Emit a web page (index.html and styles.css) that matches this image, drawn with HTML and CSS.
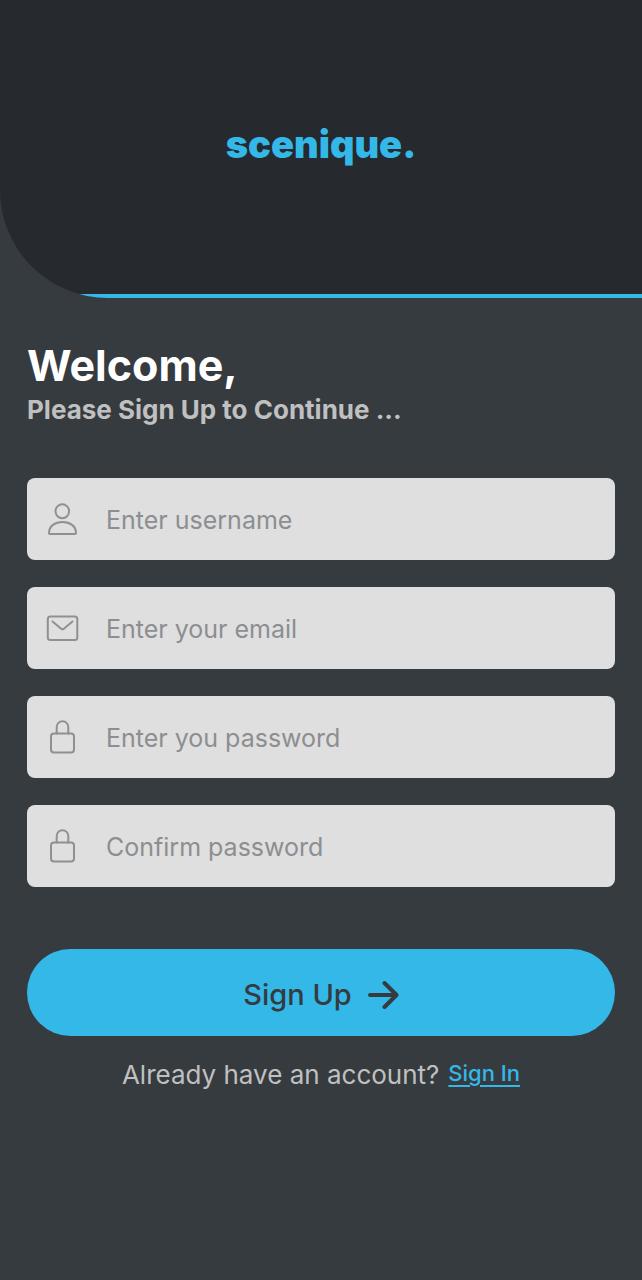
FILE: index.html
```html
<!DOCTYPE html>
<html lang="en">
<head>
<meta charset="utf-8">
<meta name="viewport" content="width=device-width, initial-scale=1">
<title>scenique. – Sign Up</title>
<link rel="stylesheet" href="styles.css">
</head>
<body>
<header class="hero"><span class="brand">scenique.</span></header>
<main class="content">
  <h1 class="title">Welcome,</h1>
  <p class="subtitle">Please Sign Up to Continue ...</p>
  <form class="form">
    <label class="field">
      <svg class="icon" viewBox="0 0 36 36" aria-hidden="true"><ellipse cx="18.300" cy="10.300" rx="6.800" ry="7"/><path d="M5 32C5 25 11 21 18.500 21S32 25 32 32q0 1-1 1H6q-1 0-1-1z"/></svg>
      <input class="input" type="text" placeholder="Enter username" aria-label="Username">
    </label>
    <label class="field">
      <svg class="icon" viewBox="0 0 36 36" aria-hidden="true"><rect x="3.800" y="6.500" width="29.500" height="23.500" rx="2.500"/><path d="M8.500 11.500l9 7.500q1 .7 2 0l9-7.500"/></svg>
      <input class="input" type="email" placeholder="Enter your email" aria-label="Email">
    </label>
    <label class="field">
      <svg class="icon" viewBox="0 0 36 36" aria-hidden="true"><rect x="7" y="14.500" width="23" height="19" rx="3"/><path d="M12.700 14.500V8a5.800 5.800 0 0 1 11.600 0v6.500"/></svg>
      <input class="input" type="password" placeholder="Enter you password" aria-label="Password">
    </label>
    <label class="field">
      <svg class="icon" viewBox="0 0 36 36" aria-hidden="true"><rect x="7" y="14.500" width="23" height="19" rx="3"/><path d="M12.700 14.500V8a5.800 5.800 0 0 1 11.600 0v6.500"/></svg>
      <input class="input" type="password" placeholder="Confirm password" aria-label="Confirm password">
    </label>
    <button class="submit" type="submit">Sign Up
      <svg class="arrow" viewBox="0 0 32 32" aria-hidden="true"><path d="M3 16h26M17.500 4l12 12-12 12"/></svg>
    </button>
  </form>
  <p class="footer">Already have an account? <a class="link" href="#">Sign In</a></p>
</main>
</body>
</html>
```
FILE: styles.css
```css
* { box-sizing: border-box; }
body {
  margin: 0;
  min-height: 100vh;
  background: #363b3f;
  color: #c0c0c0;
  font-family: Inter, "Open Sans", sans-serif;
}
.hero {
  display: flex;
  justify-content: center;
  padding: 120px 24px 130px;
  border-bottom-left-radius: 108px;
  background: linear-gradient(#33b8e8, #33b8e8) bottom / 100% 4px no-repeat #26292d;
}
.brand {
  color: #33b8e8;
  font-size: 38px;
  font-weight: 900;
  line-height: 48px;
}
.content { padding: 40px 27px; }
.title {
  margin: 0;
  color: #fff;
  font-size: 43px;
  font-weight: 700;
  line-height: 54px;
}
.subtitle {
  margin: 0;
  font-size: 26px;
  font-weight: 700;
  line-height: 36px;
}
.form {
  display: flex;
  flex-direction: column;
  gap: 27px;
  margin-top: 50px;
}
.field {
  display: flex;
  align-items: center;
  gap: 26px;
  height: 82px;
  padding: 0 17px;
  border-radius: 8px;
  background: #dfdfdf;
}
.icon {
  flex: none;
  width: 36px;
  height: 36px;
  fill: none;
  stroke: #8f9092;
  stroke-width: 2;
  stroke-linecap: round;
  stroke-linejoin: round;
}
.input {
  flex: 1;
  min-width: 0;
  padding: 2px 0 0;
  border: 0;
  outline: 0;
  background: none;
  color: #363b3f;
  font: 400 25px/36px Inter, "Open Sans", sans-serif;
}
.input::placeholder { color: #8c8e91; opacity: 1; }
.submit {
  display: flex;
  align-items: center;
  justify-content: center;
  gap: 15px;
  height: 87px;
  margin-top: 35px;
  padding: 4px 24px 0;
  border: 0;
  border-radius: 44px;
  background: #33b8e8;
  color: #363b3f;
  font: 500 29px/40px Inter, "Open Sans", sans-serif;
}
.arrow {
  width: 32px;
  height: 32px;
  fill: none;
  stroke: #363b3f;
  stroke-width: 4;
  stroke-linecap: round;
  stroke-linejoin: round;
}
.footer {
  display: flex;
  flex-wrap: wrap;
  justify-content: center;
  gap: 9px;
  margin: 21px 0 0;
  font-size: 26px;
  line-height: 36px;
}
.link {
  color: #33b8e8;
  font-weight: 500;
  font-size: 22px;
  line-height: 32px;
  text-decoration-thickness: 2px;
  text-underline-offset: 4px;
}
```
